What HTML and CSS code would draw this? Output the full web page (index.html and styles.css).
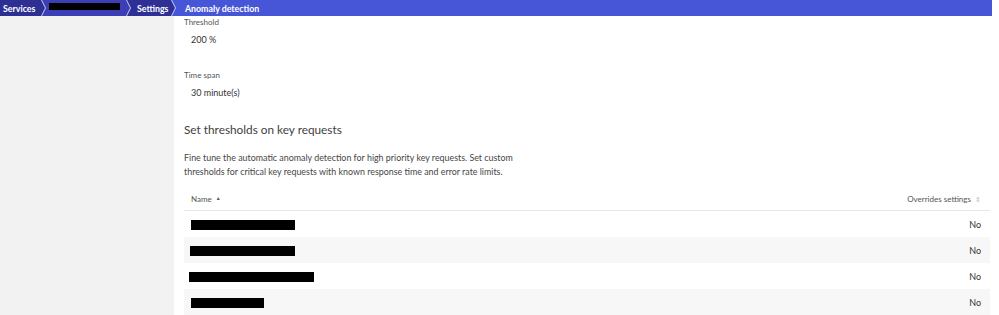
FILE: index.html
```html
<!DOCTYPE html>
<html lang="en">

<head>
    <meta charset="UTF-8">
    <meta name="viewport" content="width=device-width, initial-scale=1.0">
    <title>Anomaly detection</title>
    <link rel="stylesheet" href="styles.css">
</head>

<body>
    <!-- 面包屑 -->
    <div class="crumbs">
        <a class="crumb crumb-first">Services</a>
        <a class="crumb crumb-hidden"><span class="redact"></span></a>
        <a class="crumb crumb-settings">Settings</a>
        <a class="crumb crumb-last">Anomaly detection</a>
    </div>

    <div class="page">
        <div class="side"></div>

        <div class="main">
            <div class="field">
                <p class="label">Threshold</p>
                <p class="value">200 %</p>
            </div>
            <div class="field">
                <p class="label">Time span</p>
                <p class="value">30 minute(s)</p>
            </div>

            <h2 class="title">Set thresholds on key requests</h2>
            <p class="desc">Fine tune the automatic anomaly detection for high priority key requests. Set custom<br>thresholds for critical key requests with known response time and error rate limits.</p>

            <!-- 表格 -->
            <div class="table">
                <div class="row head">
                    <span class="name">Name <i class="sort-up">&#9650;</i></span>
                    <span class="over">Overrides settings <i class="sort-both">&#8661;</i></span>
                </div>
                <div class="row">
                    <span class="name"><b class="redact" style="width:104px"></b></span>
                    <span class="over">No</span>
                </div>
                <div class="row odd">
                    <span class="name"><b class="redact" style="width:105px;margin-left:-1px"></b></span>
                    <span class="over">No</span>
                </div>
                <div class="row">
                    <span class="name"><b class="redact" style="width:125px;margin-left:-2px"></b></span>
                    <span class="over">No</span>
                </div>
                <div class="row odd">
                    <span class="name"><b class="redact" style="width:73px"></b></span>
                    <span class="over">No</span>
                </div>
            </div>
        </div>
    </div>
</body>

</html>
```

FILE: styles.css
```css
* {
    padding: 0;
    margin: 0;
    list-style: none;
}

body {
    font-family: Lato, "Open Sans", "Liberation Sans", sans-serif;
    color: #454646;
    background: #fff;
    width: 999px;
    height: 315px;
    overflow: hidden;
}

/* 面包屑 */
.crumbs {
    display: flex;
    height: 16px;
    width: 992px;
    background: #c9cbf3;
}

.crumb {
    display: flex;
    align-items: center;
    height: 16px;
    font-size: 8.8px;
    font-weight: 700;
    color: #fff;
    white-space: nowrap;
    clip-path: polygon(0 0, calc(100% - 4px) 0, 100% 50%, calc(100% - 4px) 100%, 0 100%, 4px 50%);
    margin-left: -3px;
    padding-left: 9px;
    box-sizing: border-box;
}

.crumb-first {
    width: 45px;
    padding-left: 3px;
    margin-left: 0;
    background: #2d2f92;
    clip-path: polygon(0 0, calc(100% - 4px) 0, 100% 50%, calc(100% - 4px) 100%, 0 100%);
}

.crumb-hidden {
    width: 88px;
    background: #3c3eb5;
}

.crumb-hidden .redact {
    display: block;
    width: 71px;
    height: 7px;
    margin-top: -3px;
    margin-left: -2px;
    background: #000;
}

.crumb-settings {
    width: 48px;
    background: #2e3096;
    padding-left: 10px;
}

.crumb-last {
    flex: 1;
    background: #4756d6;
    clip-path: polygon(0 0, 100% 0, 100% 100%, 0 100%, 4px 50%);
    padding-left: 13px;
}

/* 主体 */
.page {
    display: flex;
    height: 299px;
}

.side {
    width: 174px;
    background: #f2f2f2;
}

.main {
    flex: 1;
    padding: 0 9px 0 10px;
}

.label {
    font-size: 8px;
    color: #555;
    line-height: 12px;
}

.value {
    font-size: 9px;
    color: #333;
    padding-left: 7px;
    margin-top: 5px;
    line-height: 14px;
}

.field + .field {
    margin-top: 22px;
}

.title {
    font-size: 11.8px;
    font-weight: 400;
    color: #3f4040;
    margin-top: 21px;
    line-height: 18px;
}

.desc {
    font-size: 8.9px;
    line-height: 14px;
    color: #454646;
    margin-top: 12px;
}

/* 表格 */
.table {
    margin-top: 9px;
    width: 806px;
}

.row {
    display: flex;
    justify-content: space-between;
    align-items: center;
    height: 26px;
    padding: 0 9px 0 7px;
    font-size: 9px;
    color: #333;
}

.row.head {
    height: 22px;
    border-bottom: 1px solid #e6e6e6;
    font-size: 8px;
    color: #555;
}

.row.odd {
    background: #f7f7f7;
}

.redact {
    display: inline-block;
    height: 10px;
    background: #000;
    vertical-align: middle;
}

.sort-up {
    font-style: normal;
    font-size: 5px;
    vertical-align: 2px;
    margin-left: 2px;
}

.sort-both {
    font-style: normal;
    font-size: 7px;
    color: #bbb;
    margin-left: 2px;
}
```
